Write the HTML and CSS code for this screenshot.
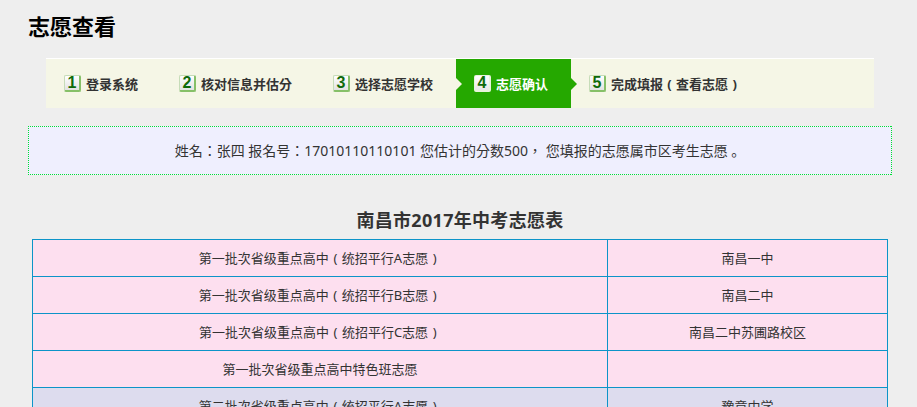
FILE: index.html
```html
<!DOCTYPE html>
<html lang="zh-CN">
<head>
  <meta charset="UTF-8">
  <meta name="viewport" content="width=device-width, initial-scale=1.0">
  <title>志愿查看</title>
  <link rel="stylesheet" href="styles.css">
</head>
<body>
  <div class="container">
    <h1 class="page-title">志愿查看</h1>

    <div class="steps">
      <div class="step"><span class="step-num">1</span>登录系统</div>
      <div class="step"><span class="step-num">2</span>核对信息并估分</div>
      <div class="step"><span class="step-num">3</span>选择志愿学校</div>
      <div class="step step-active"><span class="step-num">4</span>志愿确认</div>
      <div class="step"><span class="step-num">5</span>完成填报<span class="paren">(</span>查看志愿<span class="paren">)</span></div>
    </div>

    <div class="notice">姓名：张四 报名号：17010110110101 您估计的分数500， 您填报的志愿属市区考生志愿 <span class="stop">。</span></div>

    <h2 class="table-title">南昌市2017年中考志愿表</h2>

    <table class="wish-table">
      <tr class="row-first">
        <td class="col-batch">第一批次省级重点高中<span class="paren">(</span>统招平行A志愿<span class="paren">)</span></td>
        <td>南昌一中</td>
      </tr>
      <tr class="row-first">
        <td class="col-batch">第一批次省级重点高中<span class="paren">(</span>统招平行B志愿<span class="paren">)</span></td>
        <td>南昌二中</td>
      </tr>
      <tr class="row-first">
        <td class="col-batch">第一批次省级重点高中<span class="paren">(</span>统招平行C志愿<span class="paren">)</span></td>
        <td>南昌二中苏圃路校区</td>
      </tr>
      <tr class="row-first">
        <td class="col-batch">第一批次省级重点高中特色班志愿</td>
        <td></td>
      </tr>
      <tr class="row-second">
        <td class="col-batch">第二批次省级重点高中<span class="paren">(</span>统招平行A志愿<span class="paren">)</span></td>
        <td>豫章中学</td>
      </tr>
    </table>
  </div>
</body>
</html>
```

FILE: styles.css
```css
* {
  margin: 0;
  padding: 0;
  box-sizing: border-box;
}

html,
body {
  height: 407px;
  overflow: hidden;
}

body {
  background-color: #eeeeee;
  color: #333333;
  font-family: "Noto Sans", "Noto Sans CJK TC", sans-serif;
  font-size: 13px;
  font-feature-settings: "locl" 0;
}

.container {
  width: 864px;
  margin-left: 28px;
  padding-top: 10px;
}

.page-title {
  font-size: 22px;
  font-weight: 700;
  line-height: 32px;
  color: #000000;
}

.steps {
  display: flex;
  height: 50px;
  margin: 16px 18px 18px;
  background-color: #f5f6e6;
  border-top: 1px solid #ffffff;
}

.step {
  position: relative;
  display: flex;
  align-items: center;
  padding: 0 23px 0 18px;
  font-weight: 700;
  white-space: nowrap;
  color: #333333;
}

.step-num {
  width: 17px;
  height: 17px;
  margin-right: 5px;
  font-family: "Liberation Sans", sans-serif;
  font-size: 16px;
  font-weight: 700;
  line-height: 14px;
  text-align: center;
  color: #0f6a0a;
  background: linear-gradient(#ffffff, #e2e2e2);
  border: solid #c6dcb8;
  border-width: 1px 2px 2px 1px;
  border-right-color: #86c068;
  border-bottom-color: #86c068;
  border-radius: 2px;
}

.step-active {
  color: #ffffff;
  background-color: #25a800;
}

.step-active .step-num {
  background: linear-gradient(#ffffff, #e8e8e8);
  border-color: #e8f3dc;
}

.step-active::before,
.step-active::after {
  content: "";
  position: absolute;
  top: 50%;
  margin-top: -6px;
  border-style: solid;
  border-width: 6px 0 6px 6px;
  border-color: transparent;
}

.step-active::before {
  left: 0;
  border-left-color: #f5f6e6;
}

.step-active::after {
  left: 100%;
  border-left-color: #25a800;
}

/* full-width box with the bracket in the middle */
.paren {
  display: inline-block;
  width: 1em;
  text-align: center;
}

/* 1px on, 1px off, all four sides the same */
.notice {
  height: 49px;
  font-size: 14px;
  line-height: 49px;
  text-align: center;
  background:
    repeating-linear-gradient(90deg, #00e033 0 1px, transparent 1px 2px) top / 100% 1px no-repeat,
    repeating-linear-gradient(90deg, #00e033 0 1px, transparent 1px 2px) bottom / 100% 1px no-repeat,
    repeating-linear-gradient(0deg, #00e033 0 1px, transparent 1px 2px) left / 1px 100% no-repeat,
    repeating-linear-gradient(0deg, #00e033 0 1px, transparent 1px 2px) right / 1px 100% no-repeat,
    #efeffe;
}

.stop {
  font-feature-settings: "locl" 1;
}

.table-title {
  margin-top: 32px;
  font-size: 18px;
  font-weight: 700;
  line-height: 26px;
  letter-spacing: 0.3px;
  text-align: center;
}

.wish-table {
  width: 856px;
  margin: 6px 0 0 4px;
  table-layout: fixed;
  border-collapse: collapse;
}

.wish-table td {
  height: 37px;
  padding-bottom: 2px;
  text-align: center;
  border: 1px solid #0c94c8;
}

.col-batch {
  width: 575px;
}

.row-first td {
  background-color: #fddfef;
}

.row-second td {
  background-color: #dddcee;
}
```
